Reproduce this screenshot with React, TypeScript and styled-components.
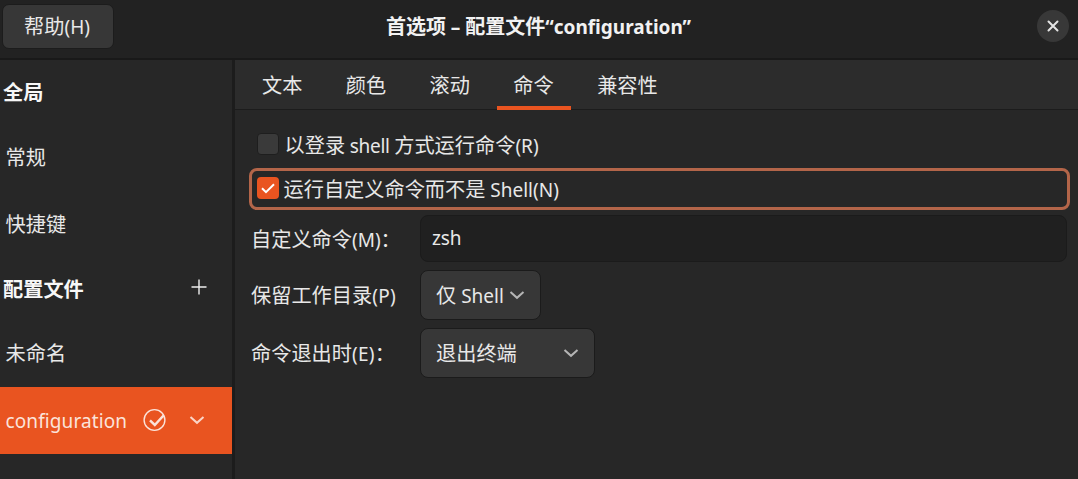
import React from "react";
import styled, { createGlobalStyle } from "styled-components";

const GlobalStyle = createGlobalStyle`
  * { box-sizing: border-box; }
  html, body { margin: 0; padding: 0; background: #272727; }
  body { overflow: hidden; }
`;

const Window = styled.div`
  width: 1078px;
  height: 479px;
  display: flex;
  flex-direction: column;
  background: #272727;
  color: #e8e8e8;
  font-family: "Noto Sans CJK SC", "Noto Sans", sans-serif;
  font-size: 20.2px;
  line-height: 30px;
  white-space: nowrap;
`;

const Latin = styled.span<{ $track?: number }>`
  font-family: "Noto Sans", "Noto Sans CJK SC", sans-serif;
  font-size: 19px;
  letter-spacing: ${(p) => p.$track ?? 0}px;
  line-height: 1;
`;

const Header = styled.header`
  flex: none;
  height: 60px;
  display: grid;
  grid-template-columns: 160px 1fr 160px;
  align-items: start;
  background: #222222;
  border-bottom: 2px solid #191919;
`;

const HelpButton = styled.button`
  width: 112px;
  height: 45px;
  margin: 4px 0 0 2px;
  padding: 0 2px 2px 0;
  border: 1px solid #1c1c1c;
  border-radius: 7px;
  background: #373737;
  color: inherit;
  font: inherit;
`;

const Title = styled.h1`
  margin: 11px 1px 0 0;
  text-align: center;
  font-size: 20px;
  font-weight: 700;
  line-height: 30px;
  color: #f2f2f2;
`;

const CloseButton = styled.button`
  justify-self: end;
  width: 32px;
  height: 32px;
  margin: 10px 9px 0 0;
  padding: 0;
  display: flex;
  align-items: center;
  justify-content: center;
  border: 0;
  border-radius: 50%;
  background: #383838;
  color: #e4e4e4;
`;

const Body = styled.div`
  flex: 1;
  display: flex;
  min-height: 0;
`;

const Sidebar = styled.nav`
  flex: none;
  width: 235px;
  border-right: 3px solid #1c1c1c;
`;

const SectionHeading = styled.div<{ $height: number }>`
  height: ${(p) => p.$height}px;
  padding: 0 25px 0 3px;
  display: flex;
  align-items: center;
  justify-content: space-between;
  font-weight: 700;
  color: #f7f7f7;

  svg {
    margin-bottom: 4px;
  }
`;

const SidebarItem = styled.div<{ $selected?: boolean }>`
  height: 67px;
  padding: 0 0 2px 5.5px;
  display: flex;
  align-items: center;
  background: ${(p) => (p.$selected ? "#e95420" : "transparent")};
  color: ${(p) => (p.$selected ? "#fbe3da" : "#e8e8e8")};
`;

const ItemName = styled.span`
  width: 136px;
`;

const ItemIcons = styled.span`
  display: flex;
  align-items: center;
  gap: 23px;
`;

const Content = styled.main`
  flex: 1;
  min-width: 0;
`;

const Tabs = styled.div`
  height: 50px;
  padding-left: 11px;
  display: flex;
  gap: 10.4px;
  background: #2c2c2c;
  border-bottom: 1px solid #1c1c1c;
`;

const Tab = styled.div<{ $active?: boolean }>`
  height: 50px;
  padding: 10px 17px 0 16px;
  border-bottom: 4px solid ${(p) => (p.$active ? "#e95420" : "transparent")};
`;

const Form = styled.div`
  padding: 14px 8px 0 14px;
`;

const CheckRow = styled.label<{ $focused?: boolean }>`
  height: 42px;
  margin-top: ${(p) => (p.$focused ? 2 : 0)}px;
  display: flex;
  align-items: center;
  gap: ${(p) => (p.$focused ? 4.5 : 5.5)}px;
  padding-left: ${(p) => (p.$focused ? 5 : 8)}px;
  border: ${(p) => (p.$focused ? "3px solid #b36549" : "0")};
  border-radius: 8px;
`;

const CheckBox = styled.span<{ $checked?: boolean }>`
  width: 22px;
  height: 22px;
  margin-bottom: 2px;
  display: flex;
  align-items: center;
  justify-content: center;
  border: ${(p) => (p.$checked ? "0" : "1px solid #1e1e1e")};
  border-radius: 4px;
  background: ${(p) => (p.$checked ? "#e95420" : "#3a3a3a")};
  color: #ffffff;
`;

const Field = styled.div<{ $top: number }>`
  margin-top: ${(p) => p.$top}px;
  padding-left: 2px;
  display: grid;
  grid-template-columns: 169px 1fr;
  align-items: center;
`;

const Entry = styled.div`
  height: 47px;
  margin-right: 3px;
  padding: 0 0 0 11px;
  display: flex;
  align-items: center;
  border: 1px solid #1b1b1b;
  border-radius: 8px;
  background: #202020;
`;

const Select = styled.div<{ $width: number }>`
  width: ${(p) => p.$width}px;
  height: 50px;
  padding: 0 15px;
  display: flex;
  align-items: center;
  justify-content: space-between;
  border: 1px solid #1b1b1b;
  border-radius: 8px;
  background: #373737;
`;

const Chevron = ({ color = "#b5b5b5" }: { color?: string }) => (
  <svg width="16" height="10" viewBox="0 0 16 10" fill="none" stroke={color} strokeWidth="2">
    <path d="M1.5 2 8 7.8 14.5 2" />
  </svg>
);

export default function App() {
  return (
    <>
      <GlobalStyle />
      <Window>
        <Header>
          <HelpButton>帮助<Latin>(H)</Latin></HelpButton>
          <Title>
            首选项<Latin> – </Latin>配置文件<Latin>“configuration”</Latin>
          </Title>
          <CloseButton aria-label="关闭">
            <svg width="12" height="12" viewBox="0 0 12 12" stroke="currentColor" strokeWidth="2" strokeLinecap="round">
              <path d="M1.5 1.5 10.5 10.5M10.5 1.5 1.5 10.5" />
            </svg>
          </CloseButton>
        </Header>
        <Body>
          <Sidebar>
            <SectionHeading $height={64}>全局</SectionHeading>
            <SidebarItem>常规</SidebarItem>
            <SidebarItem>快捷键</SidebarItem>
            <SectionHeading $height={62}>
              配置文件
              <svg width="16" height="16" viewBox="0 0 16 16" stroke="#eeeeee" strokeWidth="1.4">
                <path d="M8 .5v15M.5 8h15" />
              </svg>
            </SectionHeading>
            <SidebarItem>未命名</SidebarItem>
            <SidebarItem $selected>
              <ItemName><Latin $track={0.1}>configuration</Latin></ItemName>
              <ItemIcons>
                <svg width="24" height="24" viewBox="0 0 24 24" fill="none" stroke="#fbe3da">
                  <circle cx="12.5" cy="12" r="10.4" strokeWidth="1.4" />
                  <path d="M8 12.4 12.8 17 21.5 7.5" strokeWidth="2.5" />
                </svg>
                <Chevron color="#fbd5c7" />
              </ItemIcons>
            </SidebarItem>
          </Sidebar>
          <Content>
            <Tabs>
              <Tab>文本</Tab>
              <Tab>颜色</Tab>
              <Tab>滚动</Tab>
              <Tab $active>命令</Tab>
              <Tab>兼容性</Tab>
            </Tabs>
            <Form>
              <CheckRow>
                <CheckBox />
                <span>以登录<Latin $track={-0.3}> shell </Latin>方式运行命令<Latin>(R)</Latin></span>
              </CheckRow>
              <CheckRow $focused>
                <CheckBox $checked>
                  <svg width="14" height="11" viewBox="0 0 14 11" fill="none" stroke="currentColor" strokeWidth="2">
                    <path d="M1 5.2 5 9.2 13 1.2" />
                  </svg>
                </CheckBox>
                <span>运行自定义命令而不是<Latin> Shell(N)</Latin></span>
              </CheckRow>
              <Field $top={5}>
                <span>自定义命令<Latin>(M)</Latin>：</span>
                <Entry><Latin $track={-0.2}>zsh</Latin></Entry>
              </Field>
              <Field $top={8}>
                <span>保留工作目录<Latin $track={0.3}>(P)</Latin></span>
                <Select $width={121}><span>仅<Latin> Shell</Latin></span><Chevron /></Select>
              </Field>
              <Field $top={8}>
                <span>命令退出时<Latin $track={0.3}>(E)</Latin>：</span>
                <Select $width={175}>退出终端<Chevron /></Select>
              </Field>
            </Form>
          </Content>
        </Body>
      </Window>
    </>
  );
}
